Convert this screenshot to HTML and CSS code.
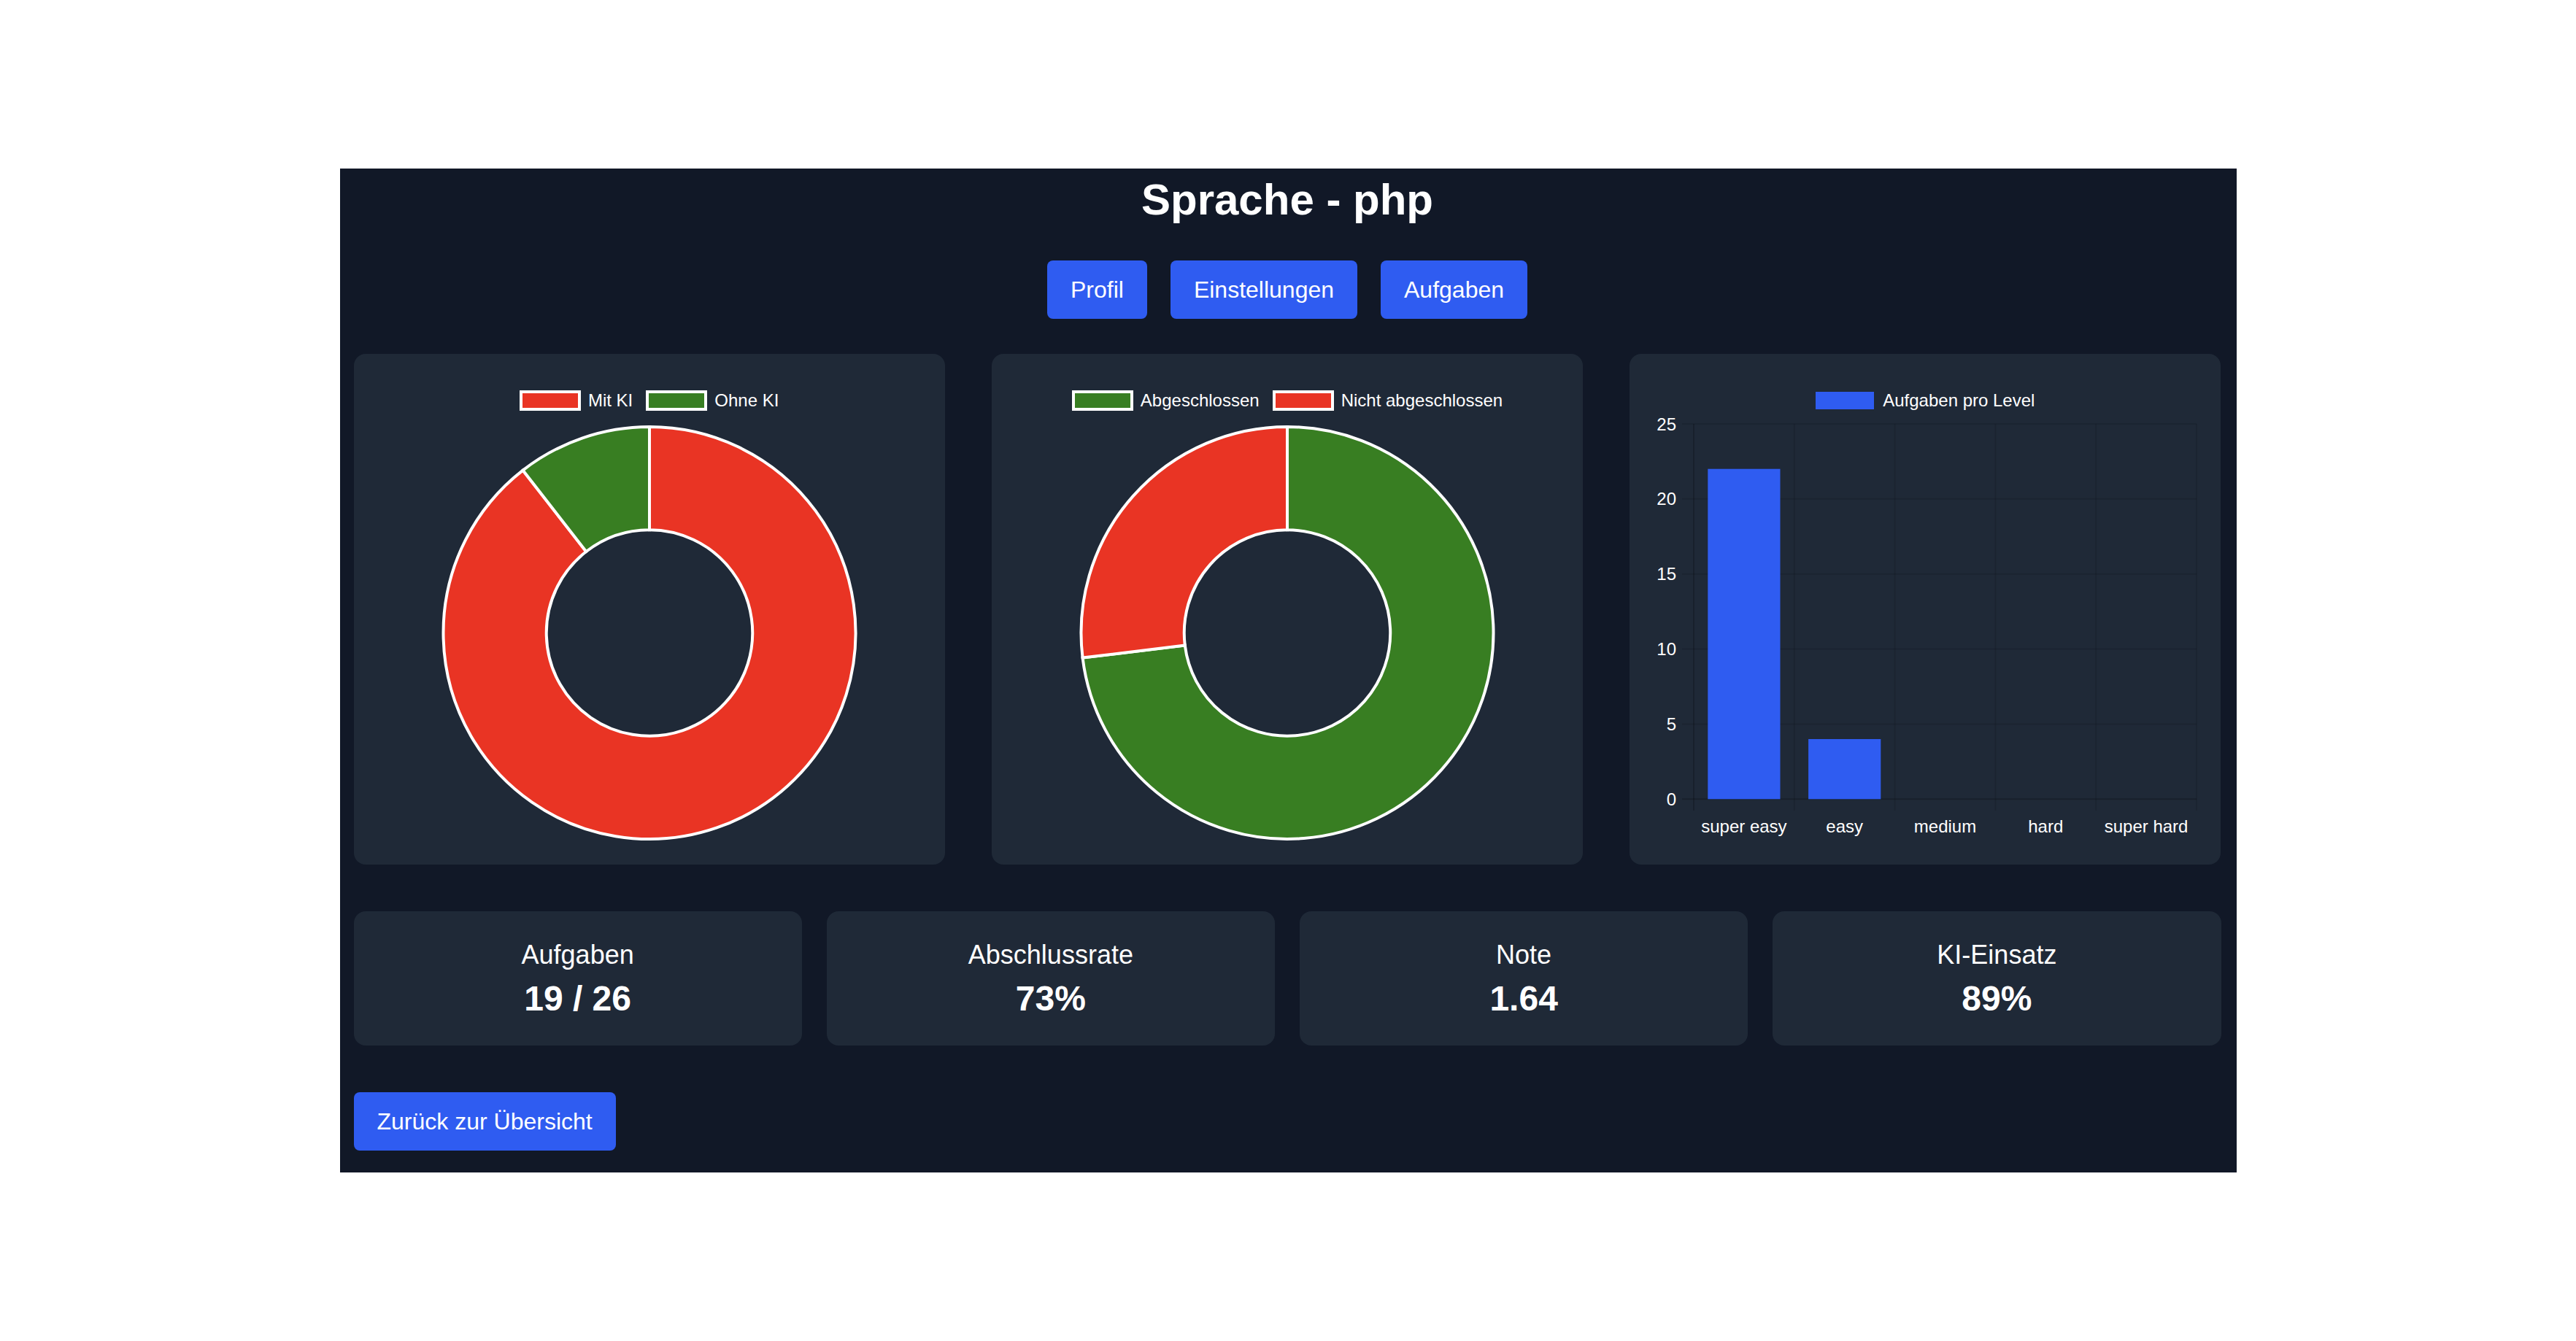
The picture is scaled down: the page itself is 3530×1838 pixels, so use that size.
FILE: index.html
```html
<!DOCTYPE html>
<html lang="de">
<head>
<meta charset="utf-8">
<title>Sprache - php</title>
<link rel="stylesheet" href="styles.css">
</head>
<body>
<main class="panel">
  <h1 class="title">Sprache - php</h1>
  <nav class="nav">
    <a class="btn" href="#">Profil</a>
    <a class="btn" href="#">Einstellungen</a>
    <a class="btn" href="#">Aufgaben</a>
  </nav>

  <section class="charts">
    <div class="card chart-card">
      <div class="legend">
        <span class="legend-item"><span class="swatch swatch-border red"></span>Mit KI</span>
        <span class="legend-item"><span class="swatch swatch-border green"></span>Ohne KI</span>
      </div>
      <svg class="donut" width="746" height="571" viewBox="0 0 746 571">
        <path class="seg-red" d="M 373 3 A 282.5 282.5 0 1 1 199.49 62.57 L 286.24 174.03 A 141.25 141.25 0 1 0 373 144.25 Z"/>
        <path class="seg-green" d="M 199.49 62.57 A 282.5 282.5 0 0 1 373 3 L 373 144.25 A 141.25 141.25 0 0 0 286.24 174.03 Z"/>
      </svg>
    </div>

    <div class="card chart-card">
      <div class="legend">
        <span class="legend-item"><span class="swatch swatch-border green"></span>Abgeschlossen</span>
        <span class="legend-item"><span class="swatch swatch-border red"></span>Nicht abgeschlossen</span>
      </div>
      <svg class="donut" width="746" height="571" viewBox="0 0 746 571">
        <path class="seg-green" d="M 373 3 A 282.5 282.5 0 1 1 92.56 319.55 L 232.78 302.53 A 141.25 141.25 0 1 0 373 144.25 Z"/>
        <path class="seg-red" d="M 92.56 319.55 A 282.5 282.5 0 0 1 373 3 L 373 144.25 A 141.25 141.25 0 0 0 232.78 302.53 Z"/>
      </svg>
    </div>

    <div class="card chart-card">
      <div class="legend">
        <span class="legend-item"><span class="swatch blue"></span>Aufgaben pro Level</span>
      </div>
      <svg class="bars" width="746" height="578" viewBox="0 0 746 578">
        <g class="grid">
          <line x1="40" y1="6" x2="745" y2="6"/>
          <line x1="40" y1="108.86" x2="745" y2="108.86"/>
          <line x1="40" y1="211.72" x2="745" y2="211.72"/>
          <line x1="40" y1="314.58" x2="745" y2="314.58"/>
          <line x1="40" y1="417.44" x2="745" y2="417.44"/>
          <line x1="193.8" y1="6" x2="193.8" y2="536"/>
          <line x1="331.6" y1="6" x2="331.6" y2="536"/>
          <line x1="469.4" y1="6" x2="469.4" y2="536"/>
          <line x1="607.2" y1="6" x2="607.2" y2="536"/>
          <line x1="745" y1="6" x2="745" y2="536"/>
        </g>
        <g class="axis">
          <line x1="40" y1="520.3" x2="745" y2="520.3"/>
          <line x1="56" y1="6" x2="56" y2="536"/>
        </g>
        <rect class="bar" x="75.3" y="67.7" width="99.2" height="452.6"/>
        <rect class="bar" x="213.1" y="438" width="99.2" height="82.3"/>
        <g class="ytick">
          <text x="32" y="6">25</text>
          <text x="32" y="108.86">20</text>
          <text x="32" y="211.72">15</text>
          <text x="32" y="314.58">10</text>
          <text x="32" y="417.44">5</text>
          <text x="32" y="520.3">0</text>
        </g>
        <g class="xtick">
          <text x="124.9" y="557">super easy</text>
          <text x="262.7" y="557">easy</text>
          <text x="400.5" y="557">medium</text>
          <text x="538.3" y="557">hard</text>
          <text x="676.1" y="557">super hard</text>
        </g>
      </svg>
    </div>
  </section>

  <section class="stats">
    <div class="card stat">
      <div class="stat-label">Aufgaben</div>
      <div class="stat-value">19 / 26</div>
    </div>
    <div class="card stat">
      <div class="stat-label">Abschlussrate</div>
      <div class="stat-value">73%</div>
    </div>
    <div class="card stat">
      <div class="stat-label">Note</div>
      <div class="stat-value">1.64</div>
    </div>
    <div class="card stat">
      <div class="stat-label">KI-Einsatz</div>
      <div class="stat-value">89%</div>
    </div>
  </section>

  <div class="footer">
    <a class="btn" href="#">Zurück zur Übersicht</a>
  </div>
</main>
</body>
</html>
```

FILE: styles.css
```css
* {
  box-sizing: border-box;
}

html, body {
  margin: 0;
  padding: 0;
}

body {
  min-height: 100vh;
  display: flex;
  align-items: center;
  justify-content: center;
  background: #ffffff;
  font-family: "Liberation Sans", Arial, Helvetica, sans-serif;
  color: #ffffff;
}

.panel {
  width: 2599px;
  background: #111827;
  padding: 7px 21px 30px 19px;
  display: flex;
  flex-direction: column;
}

.title {
  margin: 0;
  font-size: 60px;
  line-height: 72px;
  font-weight: 700;
  text-align: center;
  color: #ffffff;
}

.nav {
  margin-top: 47px;
  display: flex;
  justify-content: center;
  gap: 32px;
}

.btn {
  display: inline-block;
  background: #2f5cf1;
  color: #ffffff;
  text-decoration: none;
  font-size: 32px;
  line-height: 48px;
  padding: 16px 32px;
  border-radius: 8px;
}

.card {
  background: #1f2937;
  border-radius: 16px;
}

.charts {
  margin-top: 48px;
  display: grid;
  grid-template-columns: repeat(3, 1fr);
  gap: 64px;
}

.chart-card {
  height: 700px;
  padding: 32px;
  display: flex;
  flex-direction: column;
  align-items: center;
}

.legend {
  margin-top: 18px;
  height: 28px;
  display: flex;
  justify-content: center;
  align-items: center;
  gap: 18px;
  font-size: 24px;
  line-height: 28px;
  color: #ffffff;
  white-space: nowrap;
}

.legend-item {
  display: flex;
  align-items: center;
  gap: 10px;
}

.swatch {
  display: block;
  width: 80px;
  height: 24px;
}

.legend-item .swatch:not(.swatch-border) {
  margin-right: 2px;
}

.swatch-border {
  width: 84px;
  height: 28px;
  border: 4px solid #ffffff;
}

.red { background: #e93424; }
.green { background: #387e22; }
.blue { background: #2f5cf1; }

.donut {
  display: block;
  margin-top: 19px;
  overflow: visible;
}

.seg-red {
  fill: #e93424;
  stroke: #ffffff;
  stroke-width: 4;
  stroke-linejoin: miter;
}

.seg-green {
  fill: #387e22;
  stroke: #ffffff;
  stroke-width: 4;
  stroke-linejoin: miter;
}

.bars {
  display: block;
  margin-top: 12px;
  overflow: visible;
}

.grid line {
  stroke: rgba(0, 0, 0, 0.1);
  stroke-width: 2;
}

.axis line {
  stroke: rgba(0, 0, 0, 0.2);
  stroke-width: 2;
}

.bar {
  fill: #2f5cf1;
}

.ytick text {
  fill: #ffffff;
  font-family: "Liberation Sans", Arial, sans-serif;
  font-size: 24px;
  text-anchor: end;
  dominant-baseline: central;
}

.xtick text {
  fill: #ffffff;
  font-family: "Liberation Sans", Arial, sans-serif;
  font-size: 24px;
  text-anchor: middle;
  dominant-baseline: central;
}

.stats {
  margin-top: 64px;
  display: grid;
  grid-template-columns: repeat(4, 1fr);
  gap: 34px;
}

.stat {
  padding: 32px;
  text-align: center;
}

.stat-label {
  font-size: 36px;
  line-height: 56px;
}

.stat-value {
  font-size: 48px;
  line-height: 64px;
  font-weight: 700;
}

.footer {
  margin-top: 64px;
  display: flex;
}
```
